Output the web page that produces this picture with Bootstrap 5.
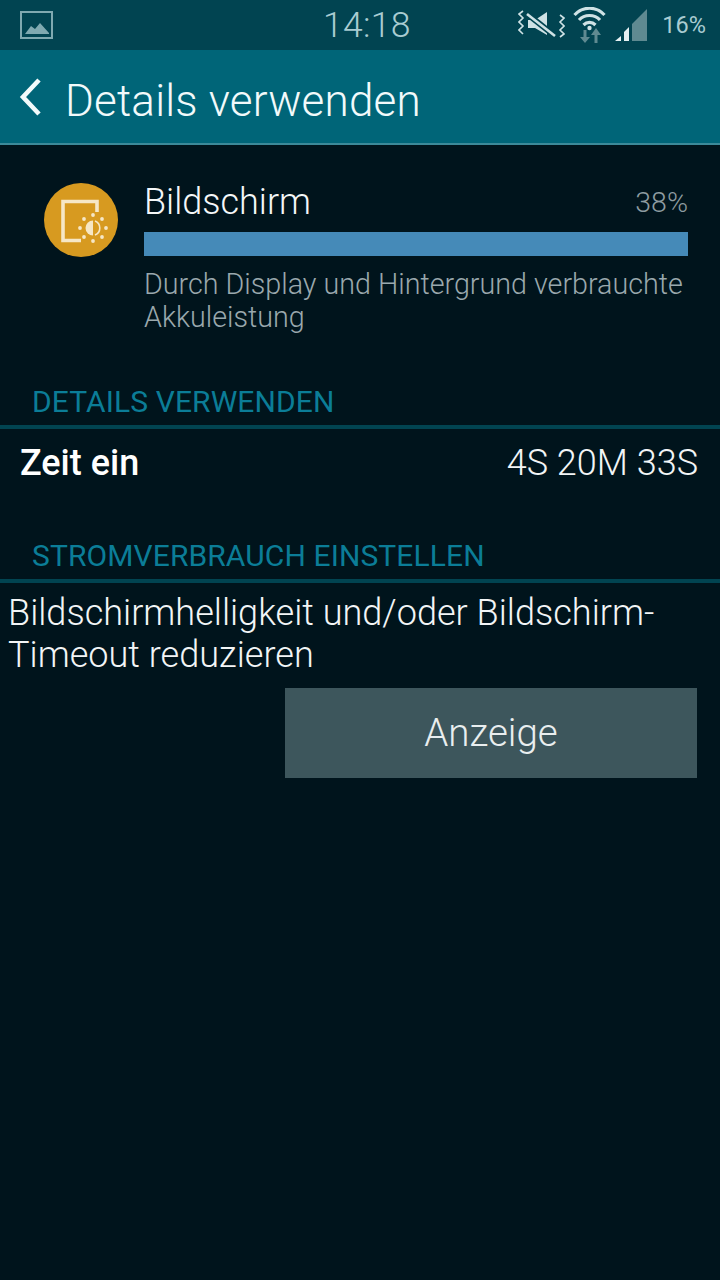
<!DOCTYPE html>
<html lang="de">
<head>
    <meta charset="UTF-8">
    <meta name="viewport" content="width=device-width, initial-scale=1.0">
    <title>Details verwenden</title>
    <link href="https://cdn.jsdelivr.net/npm/bootstrap@5.3.0/dist/css/bootstrap.min.css" rel="stylesheet">
    <style>
        html, body { height: 100%; }
        body { background: #00141c; font-family: Roboto, sans-serif; font-weight: 300; color: #fff; }
        .statusbar { height: 50px; background: #014451; color: #a9ccd2; padding: 0 14px 0 20px; }
        .statusbar-time { font-size: 35.5px; left: 323px; top: 2px; line-height: 46px; letter-spacing: .3px; }
        .statusbar-pct { font-size: 23.5px; font-weight: 400; line-height: 50px; margin-left: 15px; }
        .titlebar { height: 95px; background: #006578; border-bottom: 2px solid #3c8a99; padding-left: 19px; }
        .titlebar-text { font-size: 44px; line-height: 1; margin-left: 22px; color: #f2fafb; letter-spacing: .2px; margin-top: 9px; }
        .usage-head { padding: 37px 32px 0 44px; }
        .usage-icon { width: 74px; height: 74px; border-radius: 50%; background: #d79a20; flex-shrink: 0; margin-top: 1px; }
        .usage-body { margin-left: 26px; margin-top: -1px; }
        .usage-name { font-size: 36px; font-weight: 300; line-height: 43px; color: #f4f7f8; }
        .usage-pct { font-size: 28.5px; color: #8e9ca1; line-height: 43px; }
        .usage-bar { height: 24px; background: #458ab8; border-radius: 0; margin-top: 8px; }
        .usage-note { font-size: 28.7px; line-height: 33px; color: #9aa8ad; margin-top: 12px; }
        .section-title { font-size: 30px; font-weight: 400; color: #0b7d97; line-height: 34px; padding-left: 32px; border-bottom: 4px solid #014451; padding-bottom: 6px; letter-spacing: .1px; }
        .first-title { margin-top: 51px; }
        .second-title { margin-top: 40px; }
        .time-row { padding: 0 22px 0 20px; height: 70px; line-height: 68px; }
        .time-label { font-weight: 500; font-size: 36px; }
        .time-value { font-weight: 300; font-size: 36px; color: #f2f5f6; }
        .hint-text { font-size: 36.1px; line-height: 42px; padding: 9px 8px 0 8px; color: #f2f5f6; margin: 0; }
        .action-row { padding-right: 23px; margin-top: 12px; }
        .action-btn { width: 412px; height: 90px; background: #3d565c; border: 0; border-radius: 0; color: #e9eeef; font-size: 38.5px; font-weight: 300; padding: 0; }
        .action-btn:hover { background: #3d565c; color: #e9eeef; }
    </style>
</head>
<body>
    <div class="statusbar d-flex align-items-center position-relative">
        <svg width="34" height="29" viewBox="0 0 34 29">
            <rect x="1" y="1" width="31" height="26" fill="none" stroke="#7fa9b0" stroke-width="2"/>
            <path d="M5 23 L11 15 L15 18 L20 12 L29 22 L29 23 Z" fill="#7fa9b0"/>
        </svg>
        <span class="statusbar-time position-absolute">14:18</span>
        <div class="ms-auto d-flex align-items-center">
            <svg width="47" height="30" viewBox="0 0 47 30" fill="none">
                <path d="M5 1 L1 4 L5 8 L1 12 L5 16 L1 20 L5 24" stroke="#cfe2e5" stroke-width="1.6"/>
                <path d="M42 5 L46 8 L42 12 L46 16 L42 20 L46 24 L42 27" stroke="#cfe2e5" stroke-width="1.6"/>
                <path d="M10 10 H17 L29 2 V25 L17 18 H10 Z" fill="#cfe2e5"/>
                <path d="M8 3 L37 26" stroke="#014451" stroke-width="6"/>
                <path d="M9 4 L37 26" stroke="#cfe2e5" stroke-width="2.6"/>
            </svg>
            <svg class="ms-2" width="33" height="36" viewBox="0 0 33 36" fill="none">
                <path d="M1.5 8 C10 -1 23 -1 31.5 8" stroke="#cfe2e5" stroke-width="3.2"/>
                <path d="M6 13 C11.5 7 21.5 7 27 13" stroke="#cfe2e5" stroke-width="3.2"/>
                <path d="M10.5 18 C14 14.5 19 14.5 22.5 18" stroke="#cfe2e5" stroke-width="3.2"/>
                <circle cx="16.5" cy="21" r="2.2" fill="#cfe2e5"/>
                <path d="M10.5 23 H13.5 V30 H17 L12 36 L7 30 H10.5 Z" fill="#5f8a91"/>
                <path d="M21.5 36 H24.5 V28 H28 L23 21 L18 28 H21.5 Z" fill="#5f8a91"/>
            </svg>
            <svg class="ms-2" width="33" height="33" viewBox="0 0 33 33">
                <path d="M1 32 L7 27 V32 Z" fill="#e6f0f2"/>
                <path d="M10 23 L15 18 V32 H10 Z" fill="#e6f0f2"/>
                <path d="M18 15 L33 0 V32 H18 Z" fill="#5f8a91"/>
            </svg>
            <span class="statusbar-pct">16%</span>
        </div>
    </div>

    <div class="titlebar d-flex align-items-center">
        <svg width="24" height="38" viewBox="0 0 24 38" fill="none">
            <path d="M20 2 L4 19 L20 36" stroke="#f2fafb" stroke-width="4.6"/>
        </svg>
        <span class="titlebar-text">Details verwenden</span>
    </div>

    <div class="usage-head d-flex">
        <div class="usage-icon d-flex align-items-center justify-content-center">
            <svg width="74" height="74" viewBox="0 0 74 74" fill="none">
                <path d="M53 29 V18.5 H19 V57.5 H37" stroke="#f6e7c6" stroke-width="3.6"/>
                <path d="M49 37.5 A7.5 7.5 0 0 0 49 52.5 Z" fill="#f6e7c6"/>
                <path d="M51 38 A7.5 7.5 0 0 1 51 52" stroke="#f6e7c6" stroke-width="1.6"/>
                <g fill="#f6e7c6">
                    <circle cx="49" cy="32" r="1.9"/><circle cx="49" cy="58" r="1.9"/>
                    <circle cx="36" cy="45" r="1.9"/><circle cx="62" cy="45" r="1.9"/>
                    <circle cx="40" cy="36" r="1.9"/><circle cx="58" cy="36" r="1.9"/>
                    <circle cx="40" cy="54" r="1.9"/><circle cx="58" cy="54" r="1.9"/>
                </g>
            </svg>
        </div>
        <div class="usage-body flex-grow-1">
            <div class="d-flex justify-content-between">
                <span class="usage-name">Bildschirm</span>
                <span class="usage-pct">38%</span>
            </div>
            <div class="usage-bar progress">
                <div class="progress-bar" style="width: 100%; background: #458ab8;"></div>
            </div>
            <div class="usage-note">Durch Display und Hintergrund verbrauchte Akkuleistung</div>
        </div>
    </div>

    <div class="section-title first-title">DETAILS VERWENDEN</div>
    <div class="time-row d-flex justify-content-between">
        <span class="time-label">Zeit ein</span>
        <span class="time-value">4S 20M 33S</span>
    </div>

    <div class="section-title second-title">STROMVERBRAUCH EINSTELLEN</div>
    <p class="hint-text">Bildschirmhelligkeit und/oder Bildschirm-Timeout reduzieren</p>
    <div class="action-row d-flex justify-content-end">
        <button type="button" class="btn action-btn">Anzeige</button>
    </div>

    <script src="https://cdn.jsdelivr.net/npm/bootstrap@5.3.0/dist/js/bootstrap.bundle.min.js"></script>
</body>
</html>
